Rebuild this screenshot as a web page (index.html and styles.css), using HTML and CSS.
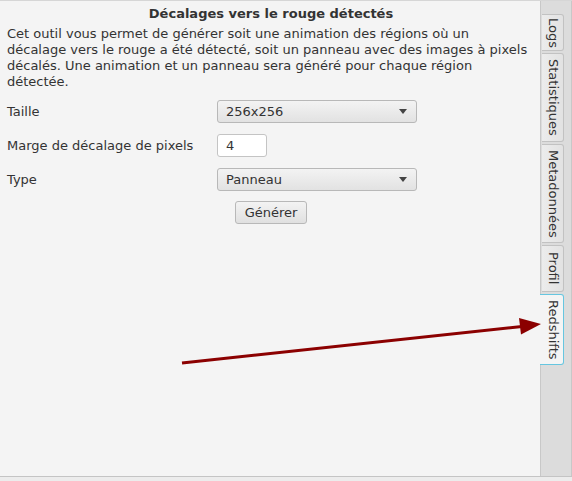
FILE: index.html
```html
<!DOCTYPE html>
<html lang="fr">
<head>
<meta charset="utf-8">
<title>Redshifts</title>
<link rel="stylesheet" href="styles.css">
</head>
<body>
<div class="window">
  <main class="content">
    <h1 class="title">Décalages vers le rouge détectés</h1>
    <p class="desc">Cet outil vous permet de générer soit une animation des régions où un<br>décalage vers le rouge a été détecté, soit un panneau avec des images à pixels<br>décalés. Une animation et un panneau sera généré pour chaque région<br>détectée.</p>
    <div class="form">
      <label class="label">Taille</label>
      <div class="combo"><span>256x256</span><span class="caret"></span></div>
      <label class="label">Marge de décalage de pixels</label>
      <div class="field">4</div>
      <label class="label">Type</label>
      <div class="combo"><span>Panneau</span><span class="caret"></span></div>
    </div>
    <div class="actions"><button class="btn">Générer</button></div>
  </main>
  <nav class="tabs">
    <div class="tab t-logs">Logs</div>
    <div class="tab t-stats">Statistiques</div>
    <div class="tab t-meta">Metadonnées</div>
    <div class="tab t-prof">Profil</div>
    <div class="tab t-red active">Redshifts</div>
  </nav>
  <svg class="arrow" width="572" height="481" viewBox="0 0 572 481">
    <line x1="182" y1="363" x2="522" y2="326.5" stroke="#8b0000" stroke-width="3"/>
    <polygon points="541,324 521,334.5 519,318" fill="#8b0000"/>
  </svg>
</div>
<div class="statusbar"></div>
</body>
</html>
```
FILE: styles.css
```css
html, body {
  margin: 0;
  padding: 0;
  background: #f4f4f4;
  font-family: "DejaVu Sans", "Liberation Sans", sans-serif;
  font-size: 13px;
  color: #333333;
}
.window {
  position: relative;
  display: flex;
  height: 476px;
  border-top: 1px solid #d6d6d6;
  box-sizing: border-box;
}
.content {
  width: 540px;
  box-sizing: border-box;
  padding: 5px 3px 0 7px;
  background: #f4f4f4;
}
.title {
  margin: 0;
  font-size: 13px;
  font-weight: bold;
  line-height: 16px;
  text-align: center;
  padding-right: 2px;
}
.desc {
  margin: 4px 0 0 0;
  line-height: 16px;
  white-space: nowrap;
}
.form {
  display: grid;
  grid-template-columns: 210px 200px;
  grid-auto-rows: 23px;
  row-gap: 11px;
  margin-top: 10px;
  align-items: center;
}
.label {
  line-height: 16px;
}
.combo {
  height: 23px;
  box-sizing: border-box;
  border: 1px solid #b8b8b8;
  border-radius: 3px;
  background: linear-gradient(#f3f3f3, #e2e2e2);
  display: flex;
  align-items: center;
  justify-content: space-between;
  padding: 0 9px 0 8px;
}
.caret {
  width: 0;
  height: 0;
  border-left: 4px solid transparent;
  border-right: 4px solid transparent;
  border-top: 5px solid #444;
}
.field {
  width: 50px;
  height: 23px;
  box-sizing: border-box;
  border: 1px solid #c4c4c4;
  border-radius: 3px;
  background: #ffffff;
  padding-left: 8px;
  line-height: 21px;
}
.actions {
  display: flex;
  justify-content: center;
  margin-top: 10px;
  padding-right: 2px;
}
.btn {
  font-family: inherit;
  font-size: 13px;
  color: #333;
  height: 23px;
  padding: 0 9px;
  border: 1px solid #b8b8b8;
  border-radius: 3px;
  background: linear-gradient(#f3f3f3, #e0e0e0);
}
.tabs {
  flex: 1;
  background: #dcdcdc;
  border-left: 1px solid #c8c8c8;
  border-right: 1px solid #c8c8c8;
  padding-top: 13px;
  display: flex;
  flex-direction: column;
  align-items: flex-start;
  gap: 2px;
}
.tab {
  writing-mode: vertical-rl;
  width: 22px;
  box-sizing: border-box;
  margin-left: 1px;
  border: 1px solid #c2c2c2;
  border-left: none;
  border-radius: 0 3px 3px 0;
  background: linear-gradient(to left, #e2e2e2, #ececec);
  line-height: 20px;
  color: #333;
  text-align: center;
}
.t-logs { height: 37px; }
.t-stats { height: 89px; }
.t-meta { height: 99px; }
.t-prof { height: 47px; }
.t-red { height: 71px; }
.tab.active {
  margin-left: -1px;
  width: 24px;
  background: #f4f4f4;
  border: 1px solid #66c6e0;
  border-left: none;
}
.arrow {
  position: absolute;
  left: 0;
  top: -1px;
  pointer-events: none;
}
.statusbar {
  height: 5px;
  border-top: 1px solid #c4c4c4;
  background: #ececec;
}
```
